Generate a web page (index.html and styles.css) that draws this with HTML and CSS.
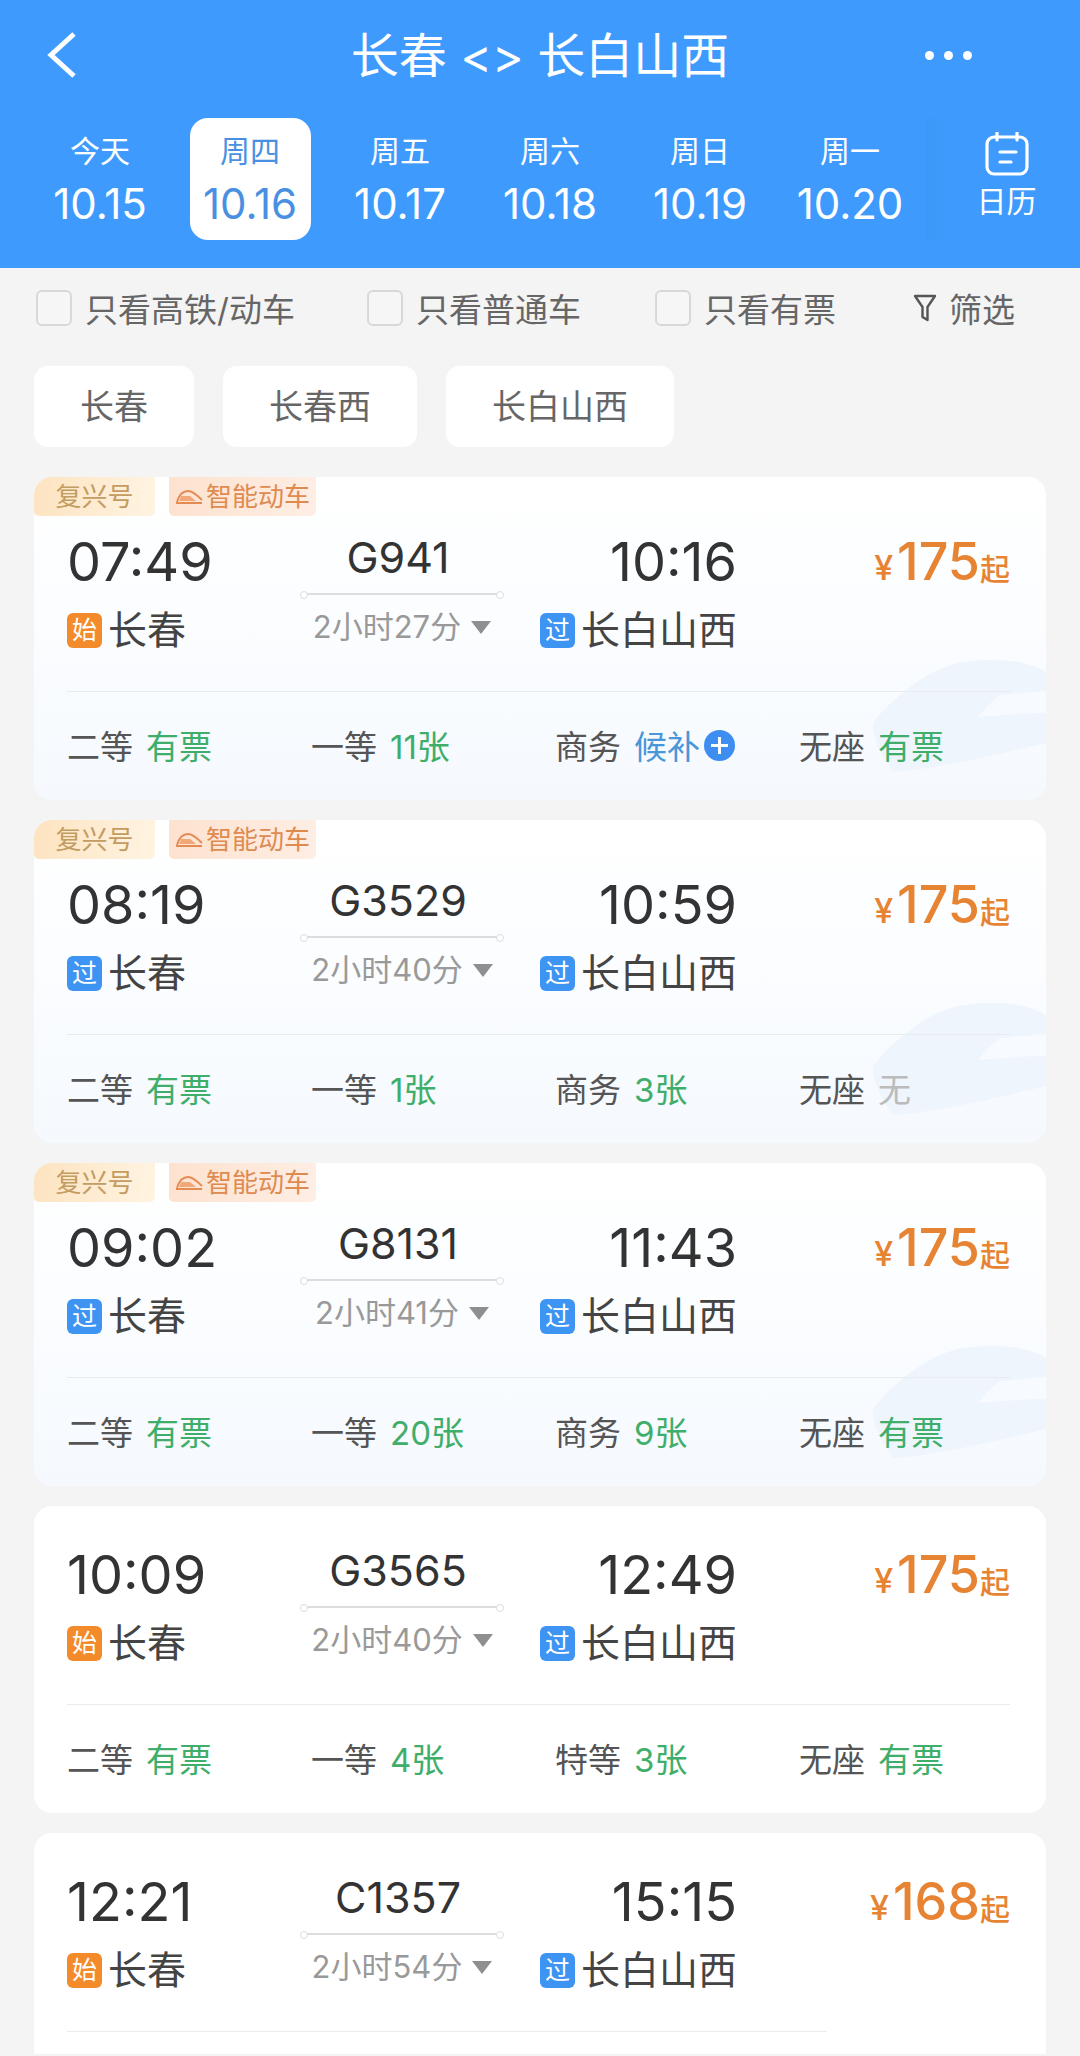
FILE: index.html
```html
<!DOCTYPE html>
<html lang="zh-CN">
<head>
    <meta charset="UTF-8">
    <meta name="viewport" content="width=device-width, initial-scale=1.0">
    <title>长春 &lt;&gt; 长白山西</title>
    <link rel="stylesheet" href="styles.css">
</head>
<body>
    <header class="top">
        <div class="title-bar">
            <svg class="back" width="30" height="46" viewBox="0 0 30 46"><path d="M27 2 L4 23 L27 44" fill="none" stroke="#fff" stroke-width="5"/></svg>
            <h1>长春 &lt;&gt; 长白山西</h1>
            <div class="more"><i></i><i></i><i></i></div>
        </div>
        <div class="date-bar">
            <div class="date-tab"><span class="week">今天</span><span class="date">10.15</span></div>
            <div class="date-tab active"><span class="week">周四</span><span class="date">10.16</span></div>
            <div class="date-tab"><span class="week">周五</span><span class="date">10.17</span></div>
            <div class="date-tab"><span class="week">周六</span><span class="date">10.18</span></div>
            <div class="date-tab"><span class="week">周日</span><span class="date">10.19</span></div>
            <div class="date-tab"><span class="week">周一</span><span class="date">10.20</span></div>
            <div class="calendar">
                <svg width="44" height="44" viewBox="0 0 44 44" fill="none" stroke="#fff" stroke-width="3.2" stroke-linecap="round"><rect x="2" y="5" width="40" height="37" rx="7"/><path d="M12 1v7M32 1v7M15 20h16M15 30h11"/></svg>
                <span>日历</span>
            </div>
        </div>
    </header>

    <div class="filters">
        <label class="check"><i></i>只看高铁/动车</label>
        <label class="check"><i></i>只看普通车</label>
        <label class="check"><i></i>只看有票</label>
        <div class="filter-btn">
            <svg width="24" height="30" viewBox="0 0 24 30" fill="none" stroke="#555" stroke-width="2.4" stroke-linejoin="round"><path d="M2 3h20l-7.5 11v13l-5-3V14z"/></svg>
            筛选
        </div>
    </div>

    <div class="stations">
        <div class="chip">长春</div>
        <div class="chip">长春西</div>
        <div class="chip">长白山西</div>
    </div>

    <div class="card tagged">
        <div class="tags">
            <span class="tag tag-fx">复兴号</span>
            <span class="tag tag-zn"><svg width="28" height="15" viewBox="0 0 28 15" fill="none" stroke="#e58a52" stroke-width="1.8"><path d="M1 14h26M2 13C4 6 8 2 13 2c5 0 10 5 14 9"/><path d="M6 7h9l6 5H4z" fill="#f0a878" stroke="none"/></svg>智能动车</span>
        </div>
        <svg class="swoosh" width="180" height="125" viewBox="0 0 180 125"><path d="M7 68C20 50 38 36 54 25 70 14 90 7 101 7c10-2 20-2 26-2 20 0 40 4 53 12v71c-50 12-110 26-153 29C15 100 5 80 7 68z" fill="#eff5fc"/><path d="M112 62c6-8 14-16 22-22 15-1 30-3 46-4v22c-22 0-46 2-68 4z" fill="#f7faff"/></svg>
        <div class="trip">
            <div class="col-from">
                <div class="time">07:49</div>
                <div class="place"><span class="badge start">始</span>长春</div>
            </div>
            <div class="col-mid">
                <div class="code">G941</div>
                <div class="track"></div>
                <div class="span">2小时27分<i class="arrow"></i></div>
            </div>
            <div class="col-to">
                <div class="time">10:16</div>
                <div class="place"><span class="badge pass">过</span>长白山西</div>
            </div>
            <div class="price"><small class="yen">¥</small>175<small>起</small></div>
        </div>
        <div class="seats">
            <div>二等<b class="ok">有票</b></div>
            <div>一等<b class="ok">11张</b></div>
            <div>商务<b class="wait">候补</b><i class="plus"></i></div>
            <div>无座<b class="ok">有票</b></div>
        </div>
    </div>

    <div class="card tagged">
        <div class="tags">
            <span class="tag tag-fx">复兴号</span>
            <span class="tag tag-zn"><svg width="28" height="15" viewBox="0 0 28 15" fill="none" stroke="#e58a52" stroke-width="1.8"><path d="M1 14h26M2 13C4 6 8 2 13 2c5 0 10 5 14 9"/><path d="M6 7h9l6 5H4z" fill="#f0a878" stroke="none"/></svg>智能动车</span>
        </div>
        <svg class="swoosh" width="180" height="125" viewBox="0 0 180 125"><path d="M7 68C20 50 38 36 54 25 70 14 90 7 101 7c10-2 20-2 26-2 20 0 40 4 53 12v71c-50 12-110 26-153 29C15 100 5 80 7 68z" fill="#eff5fc"/><path d="M112 62c6-8 14-16 22-22 15-1 30-3 46-4v22c-22 0-46 2-68 4z" fill="#f7faff"/></svg>
        <div class="trip">
            <div class="col-from">
                <div class="time">08:19</div>
                <div class="place"><span class="badge pass">过</span>长春</div>
            </div>
            <div class="col-mid">
                <div class="code">G3529</div>
                <div class="track"></div>
                <div class="span">2小时40分<i class="arrow"></i></div>
            </div>
            <div class="col-to">
                <div class="time">10:59</div>
                <div class="place"><span class="badge pass">过</span>长白山西</div>
            </div>
            <div class="price"><small class="yen">¥</small>175<small>起</small></div>
        </div>
        <div class="seats">
            <div>二等<b class="ok">有票</b></div>
            <div>一等<b class="ok">1张</b></div>
            <div>商务<b class="ok">3张</b></div>
            <div>无座<b class="none">无</b></div>
        </div>
    </div>

    <div class="card tagged">
        <div class="tags">
            <span class="tag tag-fx">复兴号</span>
            <span class="tag tag-zn"><svg width="28" height="15" viewBox="0 0 28 15" fill="none" stroke="#e58a52" stroke-width="1.8"><path d="M1 14h26M2 13C4 6 8 2 13 2c5 0 10 5 14 9"/><path d="M6 7h9l6 5H4z" fill="#f0a878" stroke="none"/></svg>智能动车</span>
        </div>
        <svg class="swoosh" width="180" height="125" viewBox="0 0 180 125"><path d="M7 68C20 50 38 36 54 25 70 14 90 7 101 7c10-2 20-2 26-2 20 0 40 4 53 12v71c-50 12-110 26-153 29C15 100 5 80 7 68z" fill="#eff5fc"/><path d="M112 62c6-8 14-16 22-22 15-1 30-3 46-4v22c-22 0-46 2-68 4z" fill="#f7faff"/></svg>
        <div class="trip">
            <div class="col-from">
                <div class="time">09:02</div>
                <div class="place"><span class="badge pass">过</span>长春</div>
            </div>
            <div class="col-mid">
                <div class="code">G8131</div>
                <div class="track"></div>
                <div class="span">2小时41分<i class="arrow"></i></div>
            </div>
            <div class="col-to">
                <div class="time">11:43</div>
                <div class="place"><span class="badge pass">过</span>长白山西</div>
            </div>
            <div class="price"><small class="yen">¥</small>175<small>起</small></div>
        </div>
        <div class="seats">
            <div>二等<b class="ok">有票</b></div>
            <div>一等<b class="ok">20张</b></div>
            <div>商务<b class="ok">9张</b></div>
            <div>无座<b class="ok">有票</b></div>
        </div>
    </div>

    <div class="card">
        <div class="trip">
            <div class="col-from">
                <div class="time">10:09</div>
                <div class="place"><span class="badge start">始</span>长春</div>
            </div>
            <div class="col-mid">
                <div class="code">G3565</div>
                <div class="track"></div>
                <div class="span">2小时40分<i class="arrow"></i></div>
            </div>
            <div class="col-to">
                <div class="time">12:49</div>
                <div class="place"><span class="badge pass">过</span>长白山西</div>
            </div>
            <div class="price"><small class="yen">¥</small>175<small>起</small></div>
        </div>
        <div class="seats">
            <div>二等<b class="ok">有票</b></div>
            <div>一等<b class="ok">4张</b></div>
            <div>特等<b class="ok">3张</b></div>
            <div>无座<b class="ok">有票</b></div>
        </div>
    </div>

    <div class="card last">
        <div class="trip">
            <div class="col-from">
                <div class="time">12:21</div>
                <div class="place"><span class="badge start">始</span>长春</div>
            </div>
            <div class="col-mid">
                <div class="code">C1357</div>
                <div class="track"></div>
                <div class="span">2小时54分<i class="arrow"></i></div>
            </div>
            <div class="col-to">
                <div class="time">15:15</div>
                <div class="place"><span class="badge pass">过</span>长白山西</div>
            </div>
            <div class="price"><small class="yen">¥</small>168<small>起</small></div>
        </div>
        <div class="seats"></div>
    </div>
</body>
</html>
```

FILE: styles.css
```css
* {
    margin: 0;
    padding: 0;
    box-sizing: border-box;
}

html, body {
    height: 2056px;
    overflow: hidden;
}

body {
    font-family: Inter, "Noto Sans CJK SC", sans-serif;
    background-color: #f4f4f4;
    color: #333;
}

i {
    font-style: normal;
}

.top {
    height: 268px;
    background: #3e9bfd;
    color: white;
}

.title-bar {
    height: 118px;
    position: relative;
    display: flex;
    justify-content: center;
    align-items: center;
    padding-bottom: 6px;
}

.title-bar h1 {
    font-size: 48px;
    font-weight: 400;
    line-height: 60px;
}

.back {
    position: absolute;
    left: 47px;
    top: 32px;
}

.more {
    position: absolute;
    left: 925px;
    top: 51px;
    display: flex;
    gap: 10px;
}

.more i {
    width: 9px;
    height: 9px;
    border-radius: 50%;
    background: white;
}

.date-bar {
    display: flex;
    padding-left: 25px;
}

.date-tab {
    width: 150px;
    height: 122px;
    display: flex;
    flex-direction: column;
    align-items: center;
    position: relative;
}

.date-tab.active {
    color: #4a90e2;
}

.date-tab.active::before {
    content: "";
    position: absolute;
    left: 15px;
    top: 0;
    width: 121px;
    height: 122px;
    background: white;
    border-radius: 18px;
}

.week, .date {
    position: relative;
}

.week {
    font-size: 30px;
    line-height: 36px;
    margin-top: 15px;
}

.date {
    font-size: 42px;
    line-height: 50px;
    margin-top: 10px;
}

.calendar {
    flex: 1;
    height: 122px;
    padding: 14px 0 0 8px;
    display: flex;
    flex-direction: column;
    align-items: center;
    font-size: 30px;
    line-height: 36px;
    background: linear-gradient(90deg, rgba(50, 125, 215, 0.12), rgba(62, 155, 253, 0) 26px);
}

.calendar span {
    margin-top: 7px;
}

.filters {
    height: 82px;
    padding: 0 0 2px 36px;
    display: flex;
    align-items: center;
    font-size: 33px;
    color: #666;
}

.check {
    display: flex;
    align-items: center;
    gap: 13px;
}

.check:nth-child(1) {
    width: 331px;
}

.check:nth-child(2) {
    width: 288px;
}

.check:nth-child(3) {
    width: 258px;
}

.check i {
    width: 36px;
    height: 36px;
    border: 2px solid #d8d8d8;
    border-radius: 6px;
    background: #f6f6f6;
}

.filter-btn {
    display: flex;
    align-items: center;
    gap: 12px;
}

.stations {
    display: flex;
    gap: 29px;
    padding-left: 34px;
    margin-top: 16px;
}

.chip {
    height: 81px;
    padding: 0 46px;
    background: white;
    border-radius: 14px;
    font-size: 34px;
    line-height: 81px;
    color: #666;
}

.card {
    margin: 0 34px 20px;
    padding: 0 36px 0 33px;
    height: 307px;
    background: white;
    border-radius: 18px;
    position: relative;
    overflow: hidden;
}

.stations + .card {
    margin-top: 30px;
}

.card.tagged {
    height: 323px;
    padding-top: 16px;
    background: linear-gradient(180deg, #ffffff 0%, #fbfdff 45%, #f5f9fe 100%);
}

.card.last {
    height: 221px;
    margin-bottom: 0;
    border-radius: 18px 18px 0 0;
}

.tags {
    position: absolute;
    left: 0;
    top: 0;
    display: flex;
    gap: 14px;
}

.tag {
    height: 39px;
    font-size: 26px;
    line-height: 38px;
    border-radius: 0 0 5px 5px;
    display: flex;
    align-items: center;
    justify-content: center;
}

.tag-fx {
    width: 121px;
    color: #c39c62;
    background: linear-gradient(100deg, #fde3c0, #fff4e2);
}

.tag-zn {
    width: 147px;
    color: #df8a4f;
    background: linear-gradient(100deg, #fde2cf, #feeee4);
    gap: 3px;
}

.swoosh {
    position: absolute;
    right: 0;
    bottom: 20px;
}

.trip {
    display: grid;
    grid-template-columns: 234px 202px 234px 1fr;
    padding-top: 42px;
    position: relative;
    height: 198px;
}

.time {
    font-size: 54px;
    line-height: 54px;
    color: #333;
}

.place {
    display: flex;
    align-items: center;
    margin-top: 19px;
    font-size: 39px;
    line-height: 44px;
    color: #444;
}

.col-to .time {
    text-align: right;
}

.col-to .place {
    justify-content: flex-end;
}

.badge {
    width: 35px;
    height: 35px;
    border-radius: 6px;
    color: white;
    font-size: 25px;
    line-height: 35px;
    text-align: center;
    margin-right: 6px;
}

.start {
    background: #f38b2b;
}

.pass {
    background: #3e94f2;
}

.col-mid {
    display: flex;
    flex-direction: column;
    align-items: center;
    margin-top: -2px;
}

.code {
    font-size: 43px;
    line-height: 48px;
    color: #333;
    margin-right: 8px;
}

.track {
    width: 100%;
    height: 2px;
    background: #ddd;
    margin-top: 12px;
    position: relative;
}

.track::before, .track::after {
    content: "";
    position: absolute;
    top: -2px;
    width: 6px;
    height: 6px;
    border: 1px solid #ddd;
    border-radius: 50%;
    background: white;
}

.track::before {
    left: -1px;
}

.track::after {
    right: -1px;
}

.span {
    display: flex;
    align-items: center;
    font-size: 31px;
    line-height: 40px;
    color: #999;
    margin-top: 12px;
}

.arrow {
    width: 0;
    height: 0;
    border-left: 10px solid transparent;
    border-right: 10px solid transparent;
    border-top: 13px solid #8f8f8f;
    margin-left: 10px;
}

.price {
    font-size: 52px;
    line-height: 54px;
    font-weight: 500;
    color: #e78433;
    text-align: right;
}

.price small {
    font-size: 30px;
    font-weight: 500;
}

.price .yen {
    font-size: 34px;
    margin-right: 4px;
}

.seats {
    border-top: 1px solid #e8ebf0;
    height: 107px;
    display: grid;
    grid-template-columns: repeat(4, 244px);
    align-items: center;
    font-size: 33px;
    color: #555;
    position: relative;
}

.seats div {
    display: flex;
    align-items: center;
}

.seats b {
    font-weight: 400;
    margin-left: 13px;
}

.ok {
    color: #3fae6a;
}

.wait {
    color: #4a96d8;
}

.none {
    color: #bbb;
}

.plus {
    width: 31px;
    height: 31px;
    border-radius: 50%;
    background: #3d8ef0;
    margin-left: 4px;
    position: relative;
}

.plus::before, .plus::after {
    content: "";
    position: absolute;
    background: white;
    left: 7px;
    top: 14px;
    width: 17px;
    height: 3px;
}

.plus::after {
    left: 14px;
    top: 7px;
    width: 3px;
    height: 17px;
}

.last .seats {
    border-top-color: transparent;
}

.last .seats::before {
    content: "";
    position: absolute;
    left: 0;
    top: -1px;
    width: 760px;
    height: 1px;
    background: #e8ebf0;
}
```
